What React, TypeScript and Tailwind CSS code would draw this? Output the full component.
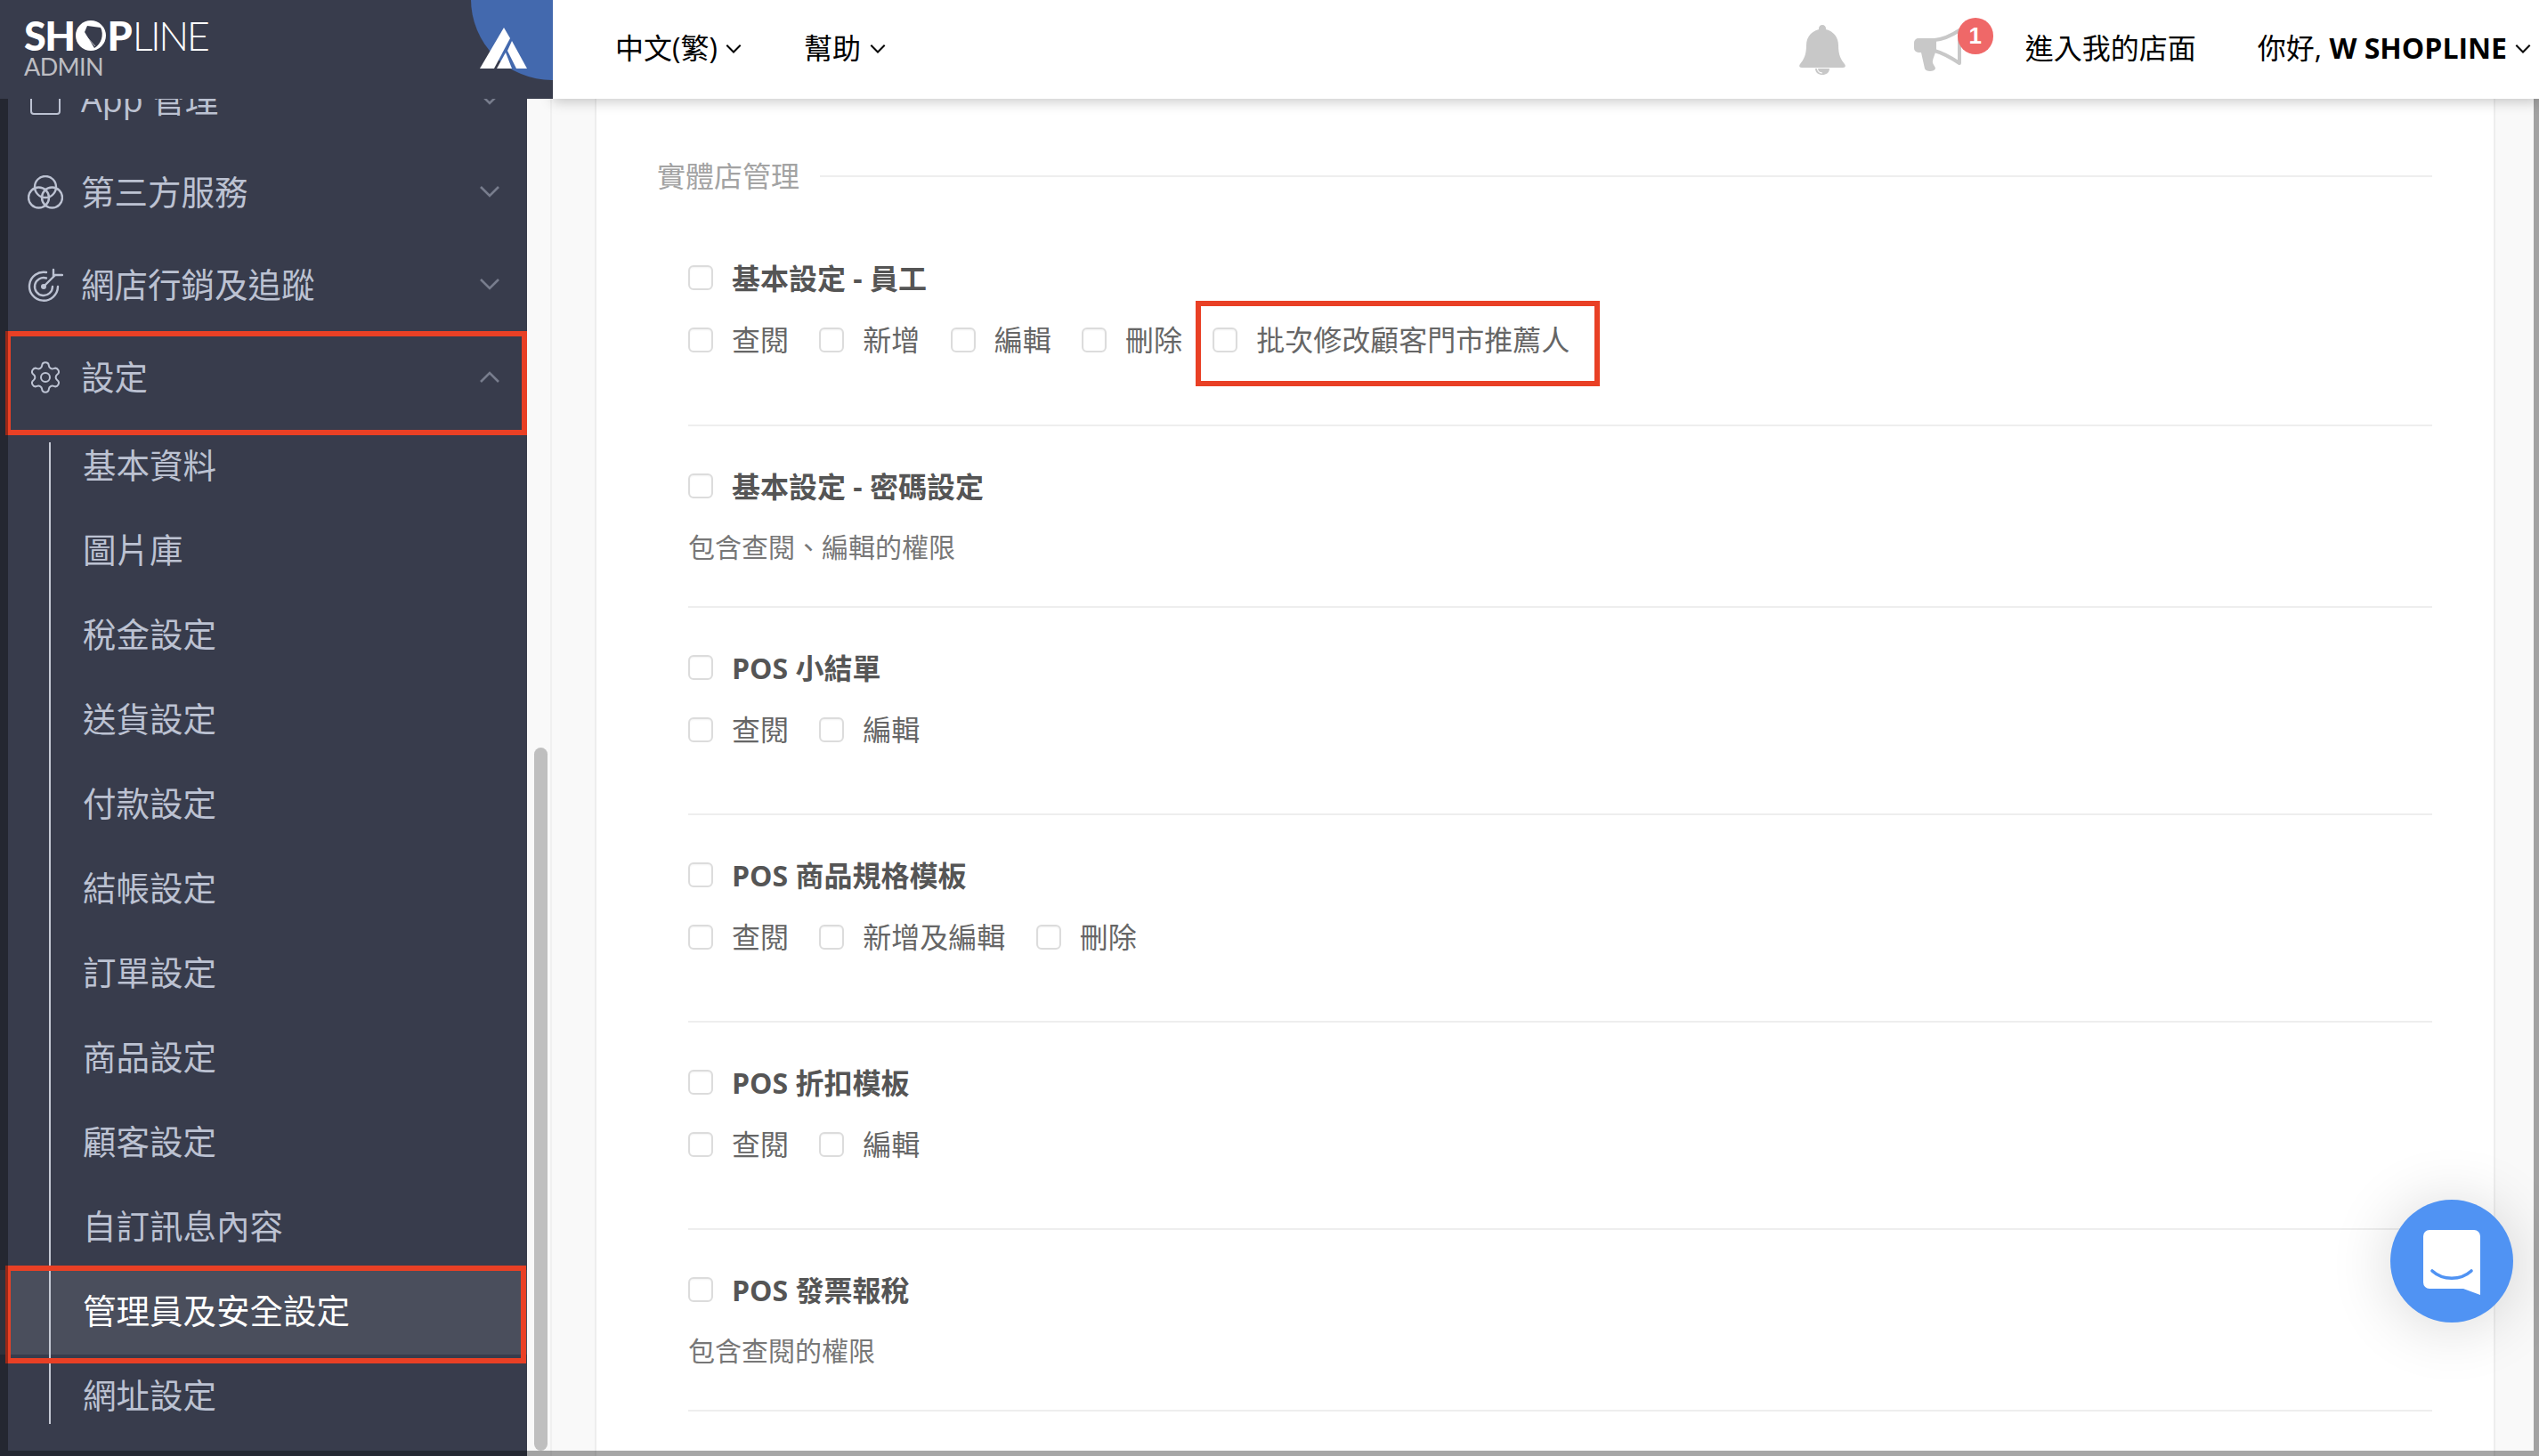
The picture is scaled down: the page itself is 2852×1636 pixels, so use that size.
import React from "react";
import { Settings } from "lucide-react";

const font = { fontFamily: '"Open Sans","Noto Sans CJK TC",sans-serif' };

function Chevron({ up = false, className = "" }: { up?: boolean; className?: string }) {
  return (
    <svg viewBox="0 0 22 13" className={className} fill="none" stroke="currentColor" strokeWidth="2.6">
      <polyline points={up ? "1,12 11,2 21,12" : "1,1 11,11 21,1"} />
    </svg>
  );
}

function AppIcon() {
  return (
    <svg viewBox="0 0 40 40" className="w-[40px] h-[40px]" fill="none" stroke="#bcc2d2" strokeWidth="2">
      <path d="M4 2 L4 33 Q4 36 7 36 L33 36 Q36 36 36 33 L36 2" />
    </svg>
  );
}

function CirclesIcon() {
  return (
    <svg viewBox="0 0 40 38" className="w-[40px] h-[38px]" fill="none" stroke="#bcc2d2" strokeWidth="2.4">
      <circle cx="20" cy="13" r="12" />
      <circle cx="12.5" cy="25" r="11.5" />
      <circle cx="27.5" cy="25" r="11.5" />
    </svg>
  );
}

function TargetIcon() {
  return (
    <svg viewBox="0 0 40 38" className="w-[40px] h-[38px]" fill="none" stroke="#bcc2d2" strokeWidth="2.4" strokeLinecap="round">
      <path d="M21 5 A16 16 0 1 0 34 21" />
      <path d="M21 11.5 A10 10 0 1 0 28 21" />
      <circle cx="18" cy="21" r="3" fill="#bcc2d2" stroke="none" />
      <path d="M18 21 L31 8" />
      <path d="M29 10 L29 2 M31 8 L39 8" />
    </svg>
  );
}

function MainRow({ icon, label, up = false }: { icon: React.ReactNode; label: string; up?: boolean }) {
  return (
    <div className="h-[104px] shrink-0 flex items-center pl-[31px] pr-[31px] pb-[3px]">
      <span className="w-[40px] flex justify-center shrink-0">{icon}</span>
      <span className="ml-[20px] text-[37.5px] text-[#bcc2d2] leading-none">{label}</span>
      <Chevron up={up} className="ml-auto w-[22px] h-[13px] text-[#787d8d]" />
    </div>
  );
}

const subs = ["基本資料", "圖片庫", "稅金設定", "送貨設定", "付款設定", "結帳設定", "訂單設定", "商品設定", "顧客設定", "自訂訊息內容", "管理員及安全設定", "網址設定"];

function Sidebar() {
  return (
    <aside className="w-[592px] shrink-0 bg-[#383c4c] overflow-hidden">
      <div className="-mt-[50px]">
        <MainRow icon={<AppIcon />} label="App 管理" />
        <MainRow icon={<CirclesIcon />} label="第三方服務" />
        <MainRow icon={<TargetIcon />} label="網店行銷及追蹤" />
        <MainRow icon={<Settings size={42} strokeWidth={1.2} color="#bcc2d2" />} label="設定" up />
        <div className="relative">
          {subs.map((s) => {
            const active = s === "管理員及安全設定";
            return (
              <div key={s} className={`h-[95px] flex items-center pl-[93px] pb-[4px] text-[37.5px] leading-none ${active ? "bg-[#4a4e5c] text-white" : "text-[#bcc2d2]"}`}>
                {s}
              </div>
            );
          })}
          <div className="absolute left-[55px] top-[20px] bottom-[17px] w-[2px] bg-[#c5c9d4]" />
        </div>
      </div>
    </aside>
  );
}

function Check() {
  return <span className="w-[28px] h-[28px] shrink-0 rounded-[6px] border-2 border-[#dcdcdc] bg-white shadow-[inset_0_1px_2px_rgba(0,0,0,0.05)]" />;
}

function Header({ label }: { label: string }) {
  return (
    <div className="h-[44px] flex items-center">
      <span className="flex mb-[2px]"><Check /></span>
      <span className="ml-[21px] text-[32px] font-bold text-[#555] leading-none">{label}</span>
    </div>
  );
}

function Options({ items }: { items: string[] }) {
  return (
    <div className="mt-[25px] h-[44px] flex items-center gap-[34.3px]">
      {items.map((t) => (
        <div key={t} className="flex items-center gap-[21px]">
          <Check />
          <span className="text-[32px] text-[#666] leading-none">{t}</span>
        </div>
      ))}
    </div>
  );
}

function Section({ label, items, pt = "pt-[46px]", pb = "pb-[72px]" }: { label: string; items: string[]; pt?: string; pb?: string }) {
  return (
    <section className={`${pt} ${pb} border-b-2 border-[#eeeeee]`}>
      <Header label={label} />
      <Options items={items} />
    </section>
  );
}

function DescSection({ label, desc }: { label: string; desc: string }) {
  return (
    <section className="pt-[46px] pb-[44px] border-b-2 border-[#eeeeee]">
      <Header label={label} />
      <div className="mt-[24px] h-[44px] flex items-center text-[30px] text-[#777] leading-none">{desc}</div>
    </section>
  );
}

function Logo() {
  return (
    <div className="absolute left-[27px] top-[17px] text-white" style={{ fontFamily: "Lato, sans-serif" }}>
      <div className="flex items-center h-[46px] text-[45px] leading-none">
        <span className="font-black tracking-[-1.5px]">SH</span>
        <svg viewBox="0 0 34 34" className="w-[34px] h-[34px] ml-[1px] shrink-0">
          <circle cx="17" cy="17" r="17" fill="#fff" />
          <path d="M13 6 L28 8 C32 16 29 26 21 31 L10 13 Z" fill="#383c4c" />
          <circle cx="14" cy="11" r="1.8" fill="#383c4c" />
          <path d="M12 18 L22 29 M10 20 L18 31 M8 22 L13 32" stroke="#fff" strokeWidth="0.7" />
        </svg>
        <span className="font-black ml-[2px]">P</span>
        <span className="font-light tracking-[-2.5px]">LINE</span>
      </div>
      <div className="mt-[0px] text-[27px] leading-[24px] text-[#bdbdc2] tracking-[-0.6px]">ADMIN</div>
    </div>
  );
}

function Bell() {
  return (
    <svg viewBox="0 0 52 56" className="w-[52px] h-[56px]">
      <path d="M26 0 C23.5 0 22 1.7 22 4 V5 C13 7.5 8 14 8 23 C8 34 5 39 1 44 C-0.5 46 0 48 3 48 H49 C52 48 52.5 46 51 44 C47 39 44 34 44 23 C44 14 39 7.5 30 5 V4 C30 1.7 28.5 0 26 0 Z" fill="#c8c8c8" />
      <path d="M18 49 C18 53.5 21.5 56 26 56 C30.5 56 34 53.5 34 49 Z" fill="#c8c8c8" />
      <path d="M20.5 49 C20.5 52 23 54 26 54" fill="none" stroke="#fff" strokeWidth="1.2" />
    </svg>
  );
}

function Megaphone() {
  return (
    <svg viewBox="0 0 56 50" className="w-[56px] h-[50px]">
      <path d="M24 14 C35 13 43 9 52 3 V40 C43 34 35 29 24 26 Z" fill="#fff" stroke="#c8c8c8" strokeWidth="4" strokeLinejoin="round" />
      <path d="M25 12 H6 A5 5 0 0 0 1 17 V23 A5 5 0 0 0 6 28 H9 L13 46 C14 50 24 50 25 46 C25 43 21 41 22 37 C23 33 24 31 25 28 Z" fill="#c8c8c8" />
    </svg>
  );
}

function TopBar() {
  return (
    <div className="flex h-[111px] shrink-0 relative z-10">
      <div className="w-[621px] shrink-0 bg-[#383c4c] relative overflow-hidden z-20">
        <div className="absolute left-[529px] -top-[92px] w-[182px] h-[182px] rounded-full bg-[#4369ae]" />
        <svg viewBox="0 0 53 46" className="absolute left-[539px] top-[31px] w-[53px] h-[46px]" fill="#fff">
          <polygon points="27,0 34,12 16,46 0,46" />
          <polygon points="36,15 53,46 41,46 31,26" />
          <polygon points="29,28 36,46 19,46" />
        </svg>
        <Logo />
      </div>
      <div className="flex-1 bg-white flex items-center pl-[70px] pr-[9px] text-[32px] text-black leading-none shadow-[0_3px_14px_rgba(0,0,0,0.22)]">
        <span className="mb-[4px]">中文(繁)</span>
        <Chevron className="ml-[9px] w-[18px] h-[10px] mb-[2px]" />
        <span className="ml-[70px] mb-[4px]">幫助</span>
        <Chevron className="ml-[10px] w-[18px] h-[10px] mb-[2px]" />
        <div className="ml-auto flex items-center">
          <Bell />
          <div className="relative ml-[76px]">
            <Megaphone />
            <span className="absolute left-[50px] -top-[11px] w-[40px] h-[41px] rounded-full bg-[#ef6868] text-white text-[26px] font-bold flex items-center justify-center" style={{ fontFamily: '"Liberation Sans",sans-serif' }}>1</span>
          </div>
          <span className="ml-[70px] mb-[4px]">進入我的店面</span>
          <span className="ml-[69px] mb-[4px] whitespace-nowrap">你好, <b>W SHOPLINE</b></span>
          <Chevron className="ml-[9px] w-[18px] h-[10px] mb-[2px]" />
        </div>
      </div>
    </div>
  );
}

function Main() {
  return (
    <main className="flex-1 bg-[#f9f9f9] flex min-w-0">
      <div className="w-[28px] shrink-0 border-r-2 border-[#f0f0f0] pl-[8px] pr-[3px] pt-[729px] pb-[6px] flex">
        <div className="flex-1 bg-[#bfbfbf] rounded-[8px]" />
      </div>
      <div className="ml-[48px] w-[2135px] shrink-0 border-x-2 border-[#eeeeee] bg-white pl-[68px] pr-[69px] overflow-hidden">
        <div className="mt-[65px] h-[44px] flex items-center gap-[23px]">
          <span className="text-[32px] text-[#a3a3a3] leading-none">實體店管理</span>
          <div className="flex-1 h-[2px] bg-[#eeeeee]" />
        </div>
        <div className="ml-[35px]">
          <Section label="基本設定 - 員工" items={["查閱", "新增", "編輯", "刪除", "批次修改顧客門市推薦人"]} pt="pt-[71px]" pb="pb-[73px]" />
          <DescSection label="基本設定 - 密碼設定" desc="包含查閱、編輯的權限" />
          <Section label="POS 小結單" items={["查閱", "編輯"]} />
          <Section label="POS 商品規格模板" items={["查閱", "新增及編輯", "刪除"]} />
          <Section label="POS 折扣模板" items={["查閱", "編輯"]} />
          <DescSection label="POS 發票報稅" desc="包含查閱的權限" />
        </div>
      </div>
    </main>
  );
}

export default function App() {
  return (
    <div className="relative w-[2852px] h-[1636px] overflow-hidden flex flex-col bg-white" style={font}>
      <TopBar />
      <div className="flex flex-1 min-h-0">
        <Sidebar />
        <Main />
      </div>

      {/* annotation boxes */}
      <div className="absolute left-[6px] top-[372px] w-[586px] h-[117px] border-[6px] border-[#e94025]" />
      <div className="absolute left-[6px] top-[1422px] w-[585px] h-[110px] border-[6px] border-[#e94025]" />
      <div className="absolute left-[1343px] top-[338px] w-[454px] h-[96px] border-[6px] border-[#e94025]" />

      {/* chat launcher */}
      <div className="absolute left-[2685px] top-[1348px] w-[138px] h-[138px] rounded-full bg-[#5093f3] shadow-[0_4px_70px_rgba(0,0,0,0.16)] flex items-center justify-center">
        <svg viewBox="0 0 64 73" className="w-[64px] h-[73px] mt-[2px]">
          <path d="M7 0 H57 A7 7 0 0 1 64 7 V73 L45 66 H7 A7 7 0 0 1 0 59 V7 A7 7 0 0 1 7 0 Z" fill="#fff" />
          <path d="M10 46 C22 57 42 57 54 46" fill="none" stroke="#5093f3" strokeWidth="3.6" strokeLinecap="round" />
        </svg>
      </div>

      {/* capture frame */}
      <div className="absolute inset-0 border-t-2 border-l-[9px] border-r-[6px] border-b-[6px] border-black/35 pointer-events-none" />
    </div>
  );
}
